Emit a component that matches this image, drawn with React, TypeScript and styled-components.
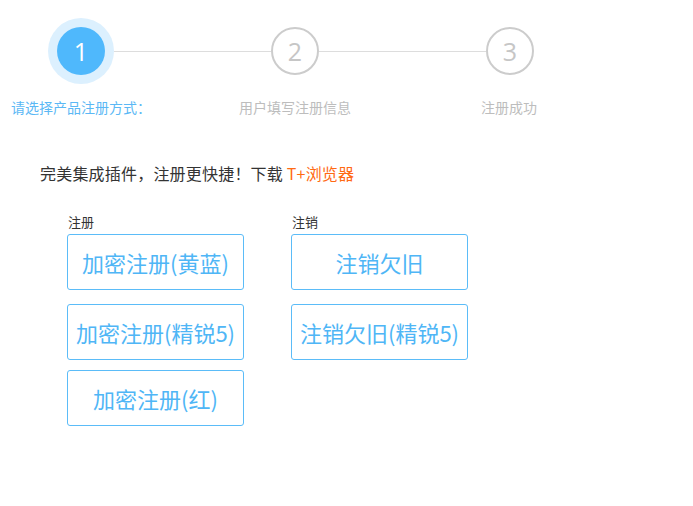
import styled, { createGlobalStyle } from "styled-components";

const GlobalStyle = createGlobalStyle`
  html, body {
    margin: 0;
    padding: 0;
    background: #fff;
  }
  body {
    font-family: "Noto Sans CJK SC", "Noto Sans", sans-serif;
    color: #333;
  }
`;

const Page = styled.div`
  width: 693px;
  height: 506px;
  overflow: hidden;
`;

/* step indicator */
const StepBar = styled.div`
  display: flex;
  align-items: center;
  padding: 18px 0 0 48px;
  height: 66px;
`;

const Halo = styled.div`
  width: 66px;
  height: 66px;
  border-radius: 50%;
  background: #dcf0fe;
  display: flex;
  align-items: center;
  justify-content: center;
  flex-shrink: 0;
`;

const Circle = styled.div<{ $active?: boolean }>`
  width: 48px;
  height: 48px;
  box-sizing: border-box;
  border-radius: 50%;
  flex-shrink: 0;
  display: flex;
  align-items: center;
  justify-content: center;
  font-family: "Open Sans", "Noto Sans", sans-serif;
  font-size: 25px;
  font-weight: 400;
  background: ${({ $active }) => ($active ? "#4fb8fc" : "#fff")};
  color: ${({ $active }) => ($active ? "#fff" : "#c6c6c6")};
  border: ${({ $active }) => ($active ? "none" : "2px solid #cccccc")};
`;

const Line = styled.div<{ $w: number }>`
  width: ${({ $w }) => $w}px;
  height: 1px;
  background: #dddddd;
  flex-shrink: 0;
`;

const StepLabels = styled.div`
  display: grid;
  grid-template-columns: repeat(3, 160px);
  column-gap: 54px;
  padding-left: 1px;
  margin-top: 13px;
`;

const StepLabel = styled.div<{ $active?: boolean }>`
  text-align: center;
  font-size: 14px;
  line-height: 20px;
  color: ${({ $active }) => ($active ? "#5bb8f5" : "#bdbdbd")};
`;

/* notice */
const Notice = styled.p`
  margin: 44px 0 0 40px;
  font-size: 16px;
  line-height: 24px;
  letter-spacing: 0.2px;
  color: #333;
`;

const Highlight = styled.span`
  color: #ff6a13;
`;

/* buttons */
const Panels = styled.div`
  display: flex;
  gap: 47px;
  padding-left: 67px;
  margin-top: 28px;
`;

const Column = styled.div`
  display: flex;
  flex-direction: column;
  width: 177px;
`;

const ColumnTitle = styled.div`
  font-size: 13px;
  line-height: 17px;
  color: #333;
  padding-left: 1px;
`;

const RegButton = styled.button<{ $mt: number }>`
  margin-top: ${({ $mt }) => $mt}px;
  width: 177px;
  height: 56px;
  box-sizing: border-box;
  border: 1px solid #5bbcf8;
  border-radius: 3px;
  background: #fff;
  color: #4fb6f6;
  font-family: "Noto Sans CJK SC", "Noto Sans", sans-serif;
  font-size: 22px;
  padding: 0;
  cursor: pointer;
  white-space: nowrap;
`;

const register = ["加密注册(黄蓝)", "加密注册(精锐5)", "加密注册(红)"];
const cancel = ["注销欠旧", "注销欠旧(精锐5)"];
const gaps = [4, 14, 10];

export default function App() {
  return (
    <Page>
      <GlobalStyle />
      <StepBar>
        <Halo>
          <Circle $active>1</Circle>
        </Halo>
        <Line $w={157} />
        <Circle>2</Circle>
        <Line $w={167} />
        <Circle>3</Circle>
      </StepBar>
      <StepLabels>
        <StepLabel $active>请选择产品注册方式：</StepLabel>
        <StepLabel>用户填写注册信息</StepLabel>
        <StepLabel>注册成功</StepLabel>
      </StepLabels>

      <Notice>
        完美集成插件，注册更快捷！下载 <Highlight>T+浏览器</Highlight>
      </Notice>

      <Panels>
        <Column>
          <ColumnTitle>注册</ColumnTitle>
          {register.map((t, i) => (
            <RegButton key={t} $mt={gaps[i]}>{t}</RegButton>
          ))}
        </Column>
        <Column>
          <ColumnTitle>注销</ColumnTitle>
          {cancel.map((t, i) => (
            <RegButton key={t} $mt={gaps[i]}>{t}</RegButton>
          ))}
        </Column>
      </Panels>
    </Page>
  );
}
